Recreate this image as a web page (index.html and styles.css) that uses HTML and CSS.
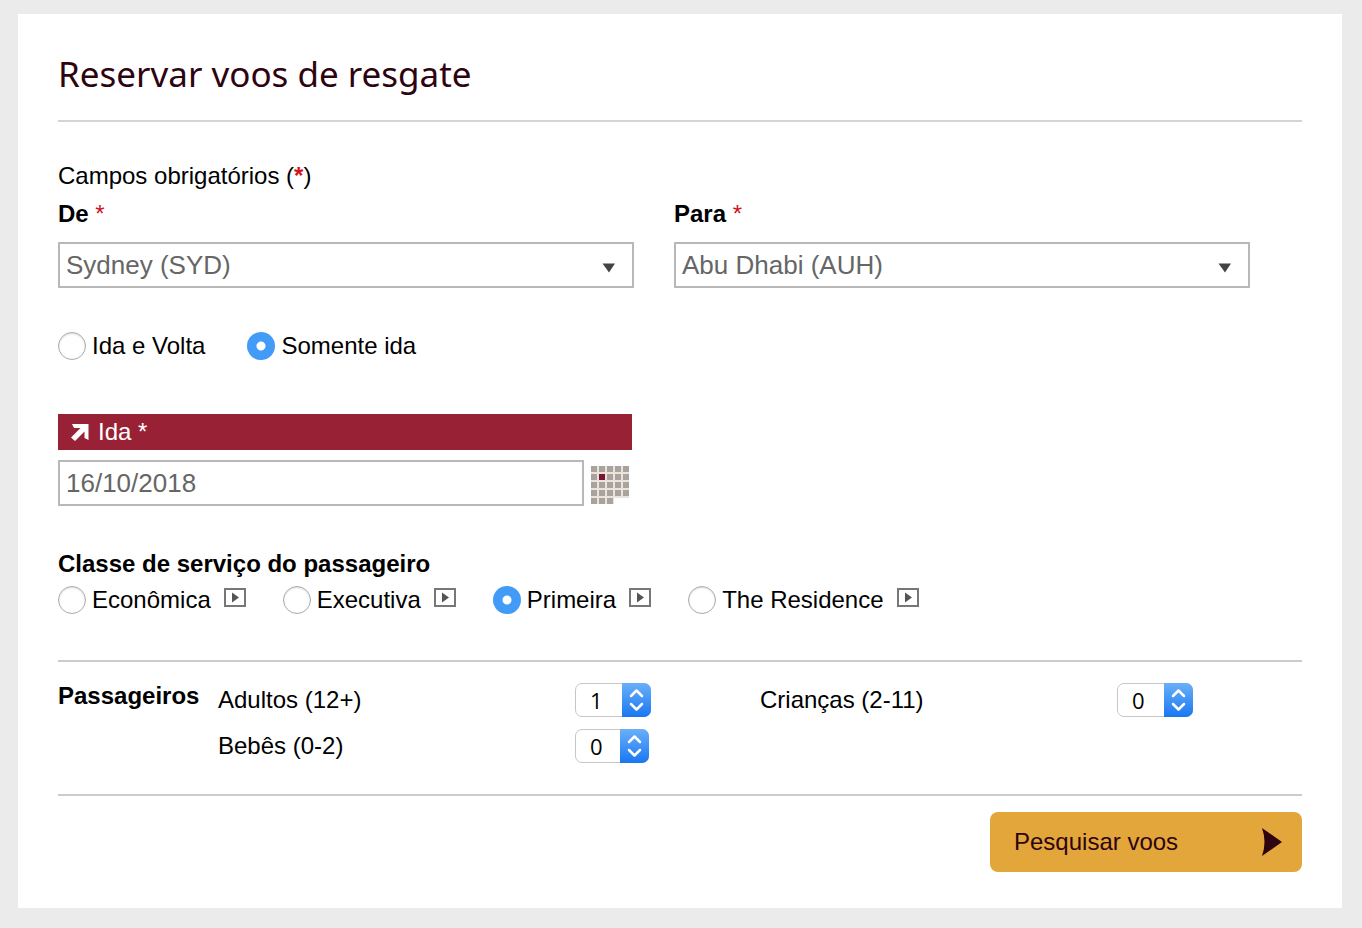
FILE: index.html
```html
<!DOCTYPE html>
<html lang="pt">
<head>
    <meta charset="UTF-8">
    <meta name="viewport" content="width=device-width, initial-scale=1.0">
    <title>Reservar voos de resgate</title>
    <link rel="stylesheet" href="styles.css">
</head>
<body>

    <form class="card">
        <h1>Reservar voos de resgate</h1>

        <p class="note">Campos obrigatórios (<span class="required">*</span>)</p>

        <div class="route">
            <div class="field">
                <label for="from">De <span class="required">*</span></label>
                <div class="combo">
                    <select id="from">
                        <option>Sydney (SYD)</option>
                    </select>
                    <svg class="caret" width="14" height="10" viewBox="0 0 14 10"><path d="M0.5 0.5H13L7 9.500Z" fill="#444"/></svg>
                </div>
            </div>
            <div class="field">
                <label for="to">Para <span class="required">*</span></label>
                <div class="combo">
                    <select id="to">
                        <option>Abu Dhabi (AUH)</option>
                    </select>
                    <svg class="caret" width="14" height="10" viewBox="0 0 14 10"><path d="M0.5 0.5H13L7 9.500Z" fill="#444"/></svg>
                </div>
            </div>
        </div>

        <div class="radios trip">
            <label class="radio"><input type="radio" name="trip">Ida e Volta</label>
            <label class="radio"><input type="radio" name="trip" checked>Somente ida</label>
        </div>

        <!-- Data de ida -->
        <div class="route">
            <div class="departure">
                <label class="departure-title" for="date">
                    <svg width="20" height="20" viewBox="0 0 20 20"><path d="M2 2H18.500V18L14.500 16V9.500L5 19L1 15.500L10.500 6H4Z" fill="#fff"/></svg>
                    Ida *
                </label>
                <div class="date-row">
                    <input type="text" id="date" value="16/10/2018">
                    <button type="button" class="calendar" aria-label="Calendário">
                        <svg width="40" height="40" viewBox="0 0 40 40">
                            <path d="M1 1H39V33H24V39H1Z" fill="#e9e3dc"/>
                            <path d="M4 1V39M12 1V39M20 1V39M28 1V33M36 1V33" stroke="#aaa39d" stroke-width="6" stroke-dasharray="6 2"/>
                            <rect x="9" y="9" width="6" height="6" fill="#7a1338"/>
                        </svg>
                    </button>
                </div>
            </div>
        </div>

        <h2>Classe de serviço do passageiro</h2>
        <div class="radios cabin">
            <div class="cabin-option">
                <label class="radio"><input type="radio" name="cabin">Econômica</label>
                <svg class="play" width="22" height="19" viewBox="0 0 22 19"><rect x="1" y="1" width="20" height="17" fill="#fff" stroke="#777" stroke-width="2"/><path d="M8 4.500L15 9.500L8 14.500Z" fill="#555"/></svg>
            </div>
            <div class="cabin-option">
                <label class="radio"><input type="radio" name="cabin">Executiva</label>
                <svg class="play" width="22" height="19" viewBox="0 0 22 19"><rect x="1" y="1" width="20" height="17" fill="#fff" stroke="#777" stroke-width="2"/><path d="M8 4.500L15 9.500L8 14.500Z" fill="#555"/></svg>
            </div>
            <div class="cabin-option">
                <label class="radio"><input type="radio" name="cabin" checked>Primeira</label>
                <svg class="play" width="22" height="19" viewBox="0 0 22 19"><rect x="1" y="1" width="20" height="17" fill="#fff" stroke="#777" stroke-width="2"/><path d="M8 4.500L15 9.500L8 14.500Z" fill="#555"/></svg>
            </div>
            <div class="cabin-option">
                <label class="radio"><input type="radio" name="cabin">The Residence</label>
                <svg class="play" width="22" height="19" viewBox="0 0 22 19"><rect x="1" y="1" width="20" height="17" fill="#fff" stroke="#777" stroke-width="2"/><path d="M8 4.500L15 9.500L8 14.500Z" fill="#555"/></svg>
            </div>
        </div>

        <!-- Passageiros -->
        <div class="passengers">
            <h2>Passageiros</h2>
            <div class="counts">
                <div class="count">
                    <label for="adults">Adultos (12+)</label>
                    <div class="stepper">
                        <select id="adults"><option>1</option><option>2</option></select>
                        <svg width="29" height="34" viewBox="0 0 29 34"><path d="M9 13L14.500 7.500L20 13M9 21L14.500 26.500L20 21" fill="none" stroke="#fff" stroke-width="2.500" stroke-linecap="round" stroke-linejoin="round"/></svg>
                    </div>
                </div>
                <div class="count">
                    <label for="children">Crianças (2-11)</label>
                    <div class="stepper">
                        <select id="children"><option>0</option><option>1</option></select>
                        <svg width="29" height="34" viewBox="0 0 29 34"><path d="M9 13L14.500 7.500L20 13M9 21L14.500 26.500L20 21" fill="none" stroke="#fff" stroke-width="2.500" stroke-linecap="round" stroke-linejoin="round"/></svg>
                    </div>
                </div>
                <div class="count">
                    <label for="infants">Bebês (0-2)</label>
                    <div class="stepper narrow">
                        <select id="infants"><option>0</option><option>1</option></select>
                        <svg width="29" height="34" viewBox="0 0 29 34"><path d="M9 13L14.500 7.500L20 13M9 21L14.500 26.500L20 21" fill="none" stroke="#fff" stroke-width="2.500" stroke-linecap="round" stroke-linejoin="round"/></svg>
                    </div>
                </div>
            </div>
        </div>

        <div class="actions">
            <button type="submit" class="search">
                Pesquisar voos
                <svg width="22" height="28" viewBox="0 0 22 28"><path d="M1 0L21 14L1 28Q6 14 1 0Z" fill="#2d0410"/></svg>
            </button>
        </div>
    </form>

</body>
</html>
```
FILE: styles.css
```css
* {
    box-sizing: border-box;
}

body {
    margin: 0;
    padding: 14px 20px 20px 18px;
    background: #ebebeb;
    color: #000;
    font-family: "Liberation Sans", Arial, sans-serif;
    font-size: 24px;
    line-height: 28px;
}

.card {
    padding: 36px 40px;
    background: #fff;
}

h1 {
    margin: 0 0 40px;
    padding-bottom: 22px;
    border-bottom: 2px solid #d4d4d4;
    color: #2d0410;
    font-family: "Noto Sans", sans-serif;
    font-size: 35px;
    font-weight: 400;
    line-height: 48px;
}

h2 {
    margin: 0;
    font-size: 24px;
    font-weight: 700;
}

.note {
    margin: 0 0 10px;
}

.required {
    color: #d0121f;
    font-weight: 700;
}

.route {
    display: grid;
    grid-template-columns: 1fr 1fr;
    gap: 40px;
    padding-right: 52px;
}

.field label {
    display: block;
    margin-bottom: 14px;
    font-weight: 700;
}

.field .required {
    font-weight: 400;
}

.combo {
    position: relative;
}

.combo select,
.date-row input {
    width: 100%;
    height: 46px;
    padding: 0 6px;
    border: 2px solid #b8b8b8;
    border-radius: 0;
    background: #fff;
    color: #666;
    font-family: inherit;
    font-size: 26px;
    appearance: none;
}

.caret {
    position: absolute;
    top: 21px;
    right: 18px;
    pointer-events: none;
}

.radios {
    display: flex;
    flex-wrap: wrap;
}

.radio {
    display: flex;
    align-items: center;
    gap: 6px;
}

.radio input {
    width: 28px;
    height: 28px;
    margin: 0;
    border: 1px solid #aaa;
    border-radius: 50%;
    background: #fff;
    box-shadow: inset 0 1px 2px #ddd;
    appearance: none;
}

.radio input:checked {
    border: none;
    background: radial-gradient(circle, #fff 4px, #429bf7 5px);
    box-shadow: none;
}

.trip {
    gap: 42px;
    margin: 44px 0 54px;
}

.departure {
    padding-right: 2px;
}

.departure-title {
    display: flex;
    align-items: center;
    gap: 8px;
    height: 36px;
    margin-bottom: 10px;
    padding-left: 12px;
    background: #992135;
    color: #fff;
}

.date-row {
    display: flex;
    align-items: center;
    gap: 6px;
    margin-bottom: 44px;
}

.date-row input {
    flex: 1;
    min-width: 0;
}

.calendar {
    display: flex;
    padding: 4px 2px 0 0;
    border: none;
    background: none;
}

.cabin {
    gap: 37px;
    margin: 8px 0 46px;
}

.cabin-option {
    display: flex;
    gap: 13px;
}

.play {
    margin-top: 2px;
}

.passengers {
    display: flex;
    padding: 21px 0 31px;
    border-top: 2px solid #ccc;
    border-bottom: 2px solid #ccc;
}

.passengers h2 {
    width: 160px;
    line-height: 26px;
}

.counts {
    display: grid;
    flex: 1;
    grid-template-columns: 1fr 1fr;
    row-gap: 12px;
}

.count {
    display: grid;
    grid-template-columns: 1fr 185px;
    align-items: center;
}

.stepper {
    position: relative;
    width: 76px;
    height: 34px;
}

.stepper.narrow {
    width: 74px;
}

.stepper select {
    width: 100%;
    height: 100%;
    padding: 0 14px;
    border: 1px solid #c6c6c6;
    border-radius: 7px;
    background: #fff;
    color: #000;
    font-family: "Open Sans", sans-serif;
    font-size: 22px;
    font-weight: 500;
    line-height: 30px;
    appearance: none;
}

.stepper svg {
    position: absolute;
    top: 0;
    right: 0;
    border-radius: 0 7px 7px 0;
    background: linear-gradient(#69b0f8, #1a77f2);
    pointer-events: none;
}

.actions {
    display: flex;
    justify-content: flex-end;
    padding-top: 16px;
}

.search {
    display: flex;
    align-items: center;
    justify-content: space-between;
    width: 312px;
    height: 60px;
    padding: 0 19px 0 24px;
    border: none;
    border-radius: 8px;
    background: #e3a63b;
    color: #2d0410;
    font-family: inherit;
    font-size: 24px;
}

@media (max-width: 900px) {
    .route,
    .counts {
        grid-template-columns: 1fr;
        padding-right: 0;
    }
}
```
